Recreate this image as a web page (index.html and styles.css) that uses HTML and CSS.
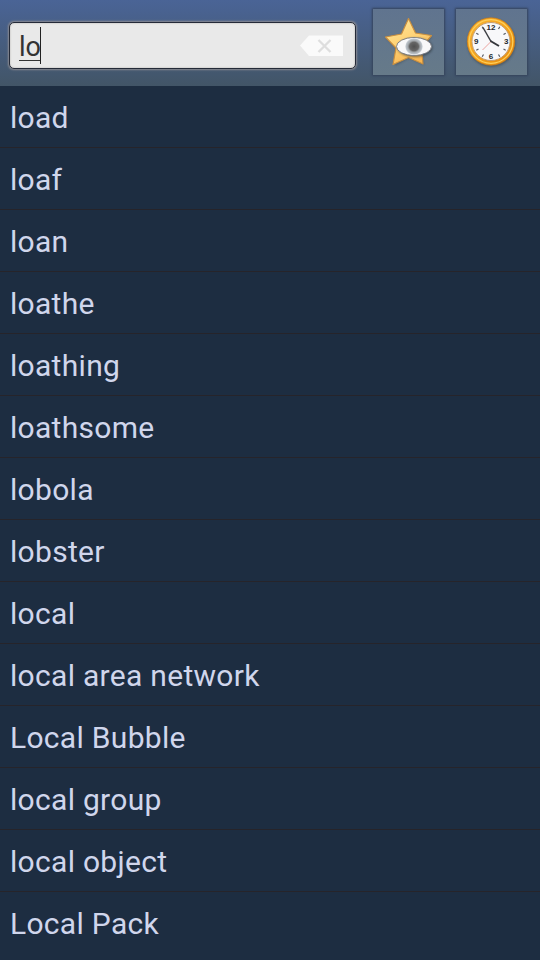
FILE: index.html
```
<!DOCTYPE html>
<html lang="en">
<head>
<meta charset="utf-8">
<title>Dictionary</title>
<link rel="stylesheet" href="styles.css">
</head>
<body>
<header class="toolbar">
  <div class="search">
    <span class="query">lo</span><span class="caret"></span>
    <svg class="clear" width="44" height="22" viewBox="0 0 44 22"><path d="M0 10.500 9 .5H43v20.500H9Z" fill="#fafafa"/><path d="m18.500 5 12 12m0-12-12 12" stroke="#dedede" stroke-width="2.300"/></svg>
  </div>
  <div class="tool">
    <svg width="71" height="66" viewBox="0 0 71 66">
      <defs>
        <linearGradient id="gold" x1="0" y1="0" x2=".5" y2="1"><stop offset="0" stop-color="#ffe9a0"/><stop offset=".5" stop-color="#ffd57a"/><stop offset="1" stop-color="#f9b650"/></linearGradient>
        <radialGradient id="iris"><stop offset="0" stop-color="#505050"/><stop offset=".5" stop-color="#666"/><stop offset=".68" stop-color="#a3a8ac"/><stop offset=".88" stop-color="#bcc3ca"/><stop offset="1" stop-color="#f0f2f4"/></radialGradient>
        <filter id="soft" x="-20%" y="-20%" width="140%" height="140%"><feGaussianBlur stdDeviation="1"/></filter>
      </defs>
      <path d="m36 11 7.200 15L59 28 48 40l3 16-15-7-14 8 2-17-11-11 16-3Z" fill="#303a42" opacity=".4" filter="url(#soft)"/>
      <path d="m35.500 9.500 7 14.500 16 2.500-10 12L50 55 35.500 48.500 20 55.500 23 39 12.500 28 28.500 25Z" fill="url(#gold)" stroke="#c98f40" stroke-width="1.200" stroke-linejoin="round"/>
      <ellipse cx="42" cy="38.500" rx="17.500" ry="9.500" fill="#293239" opacity=".6" filter="url(#soft)"/>
      <ellipse cx="41" cy="37.500" rx="17.500" ry="9" fill="#f8f8f9" stroke="#777980" stroke-width=".9"/>
      <ellipse cx="41" cy="37.500" rx="9" ry="8.500" fill="url(#iris)"/>
    </svg>
  </div>
  <div class="tool">
    <svg width="71" height="66" viewBox="0 0 71 66">
      <defs><linearGradient id="rim" x1="0" y1="0" x2="1" y2="1"><stop offset="0" stop-color="#f8b336"/><stop offset=".5" stop-color="#f3a21b"/><stop offset="1" stop-color="#e58b10"/></linearGradient></defs>
      <circle cx="35.500" cy="34" r="24" fill="#303a42" opacity=".5" filter="url(#soft)"/>
      <circle cx="35" cy="32.500" r="21.500" fill="#f8f8fa" stroke="url(#rim)" stroke-width="4.600"/>
      <circle cx="35" cy="32.500" r="21.800" fill="none" stroke="#ffd05a" stroke-width="1.200"/>
      <circle cx="35" cy="32.500" r="23.700" fill="none" stroke="#cf7b13" stroke-width=".7"/>
      <circle cx="35" cy="32.500" r="19" fill="none" stroke="#b88a58" stroke-width=".8"/>
      <path d="m42.500 20 1.300-2.200M47.500 25.500l2.200-1.300M47.500 40l2.200 1.300M42.500 45.500l1.300 2.200M27.500 45.500l-1.300 2.200M22.500 40l-2.200 1.300M22.500 25.500l-2.200-1.300M27.500 20l-1.300-2.200" stroke="#555a64" stroke-width="1.200"/>
      <path d="m35 32.500-8.500 8.500" stroke="#eca4a0" stroke-width="1"/>
      <path d="m35 32.500-8-14" stroke="#3b3e43" stroke-width="1.500"/>
      <path d="m34.500 32 8.500 5" stroke="#34373c" stroke-width="2"/>
      <g class="digits"><text x="35" y="20.500">12</text><text x="50.300" y="35.300">3</text><text x="35" y="50">6</text><text x="20.300" y="35.300">9</text></g>
    </svg>
  </div>
</header>
<ul class="words">
  <li>load</li>
  <li>loaf</li>
  <li>loan</li>
  <li>loathe</li>
  <li>loathing</li>
  <li>loathsome</li>
  <li>lobola</li>
  <li>lobster</li>
  <li>local</li>
  <li>local area network</li>
  <li>Local Bubble</li>
  <li>local group</li>
  <li>local object</li>
  <li>Local Pack</li>
</ul>
</body>
</html>
```
FILE: styles.css
```
* { box-sizing: border-box; }
body {
  margin: 0;
  height: 960px;
  overflow: hidden;
  background: #1d2d41;
  font-family: Roboto, "Liberation Sans", sans-serif;
}
.toolbar {
  display: flex;
  align-items: flex-start;
  height: 86px;
  padding: 9px 13px 0 9px;
  background: linear-gradient(#4a6496, #425567);
}
.search {
  display: flex;
  align-items: center;
  width: 347px;
  height: 47px;
  margin: 13px 17px 0 0;
  padding: 0 11px 0 9px;
  border: 1px solid #242a38;
  border-radius: 5px;
  background: #e9e9e9;
  box-shadow: 0 0 2px 1px #8b8b91, inset 0 0 2px #aaa6a3;
}
.query {
  width: 21px;
  height: 30px;
  border-bottom: 1px solid #333;
  font-size: 27px;
  line-height: 32px;
  color: #333;
}
.caret {
  width: 1px;
  height: 37px;
  background: #222;
}
.clear { margin-left: auto; }
.tool {
  width: 71px;
  height: 66px;
  margin-right: 12px;
  background: linear-gradient(#60748f, #667a89);
  box-shadow: 0 0 2px 1px #34435a;
}
.tool:last-child { margin-right: 0; }
.tool svg { display: block; }
.digits {
  font: bold 8px "Liberation Sans", sans-serif;
  fill: #25282e;
  text-anchor: middle;
}
.words {
  margin: 0;
  padding: 0;
  list-style: none;
}
.words li {
  height: 62px;
  padding-left: 10px;
  border-bottom: 1px solid #26242a;
  font-size: 30px;
  letter-spacing: .3px;
  line-height: 63px;
  color: #d0d6ec;
}
.words li:last-child { border-bottom-color: transparent; }
```
